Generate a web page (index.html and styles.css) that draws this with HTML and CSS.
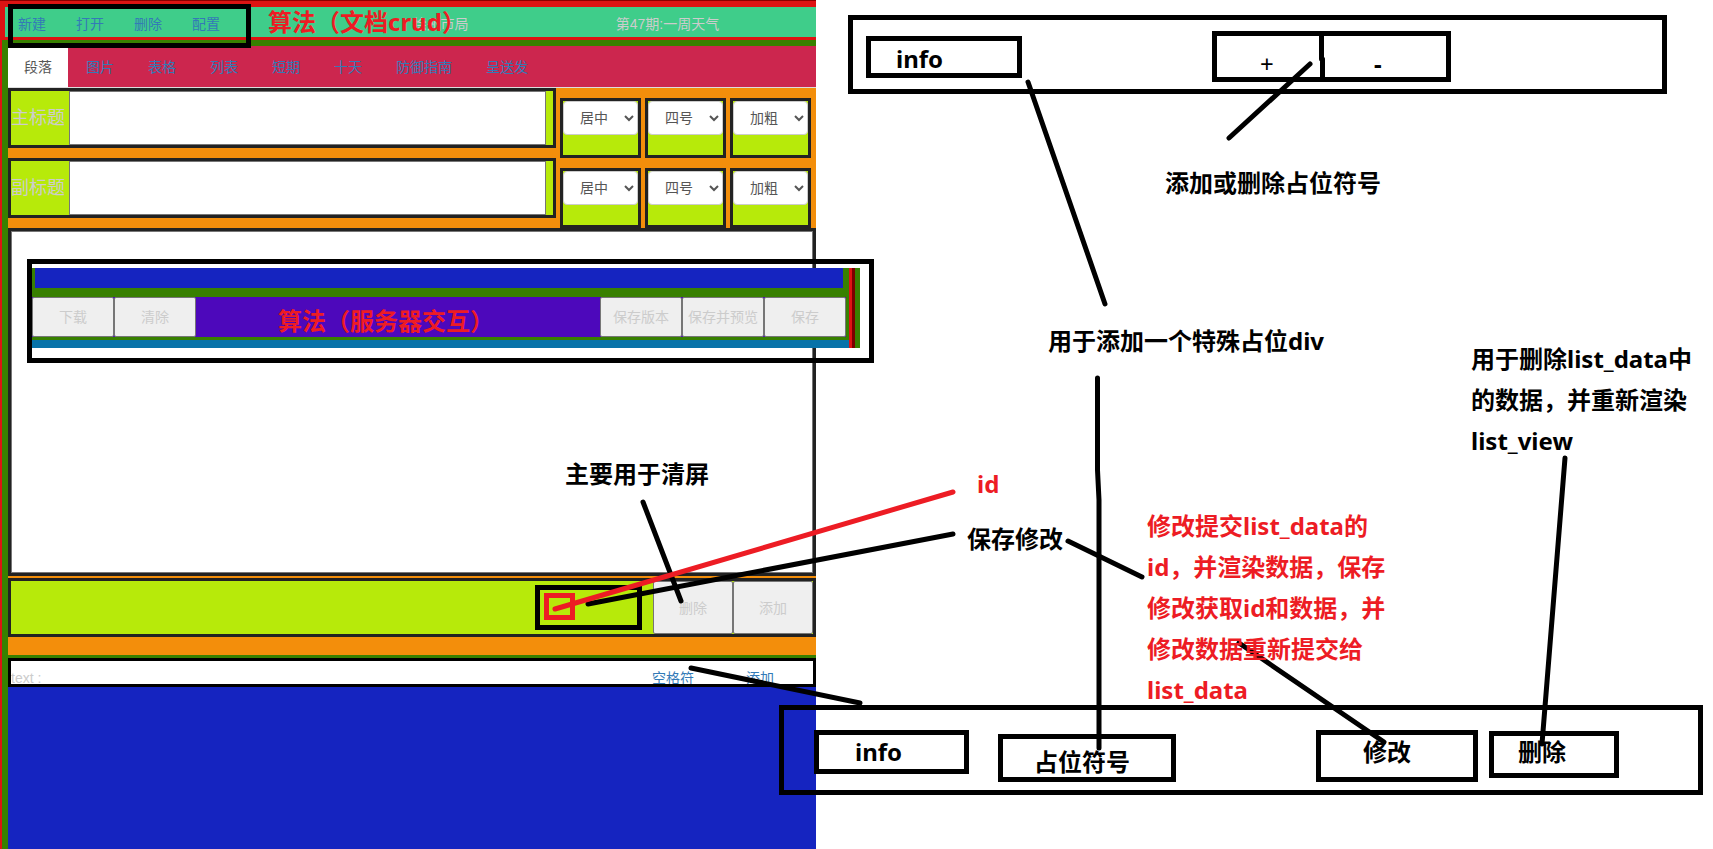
FILE: index.html
```html
<!DOCTYPE html>
<html lang="zh-CN">
<head>
<meta charset="utf-8">
<title>文档编辑</title>
<link rel="stylesheet" href="styles.css">
</head>
<body>
<div class="page">
  <main class="app">
    <header class="topbar">
      <nav class="menu"><a href="#">新建</a><a href="#">打开</a><a href="#">删除</a><a href="#">配置</a></nav>
      <span class="org">徐州市局</span>
      <span class="issue">第47期:一周天气</span>
    </header>
    <div class="body">
      <nav class="tabs">
        <a class="active" href="#">段落</a><a href="#">图片</a><a href="#">表格</a><a href="#">列表</a><a href="#">短期</a><a href="#">十天</a><a href="#">防御指南</a><a href="#">呈送发</a>
      </nav>
      <form class="editor">
        <div class="row">
          <div class="field"><label for="main-title">主标题</label><input id="main-title" type="text"></div>
          <div class="cell"><select aria-label="主标题对齐"><option>居中</option></select></div>
          <div class="cell"><select aria-label="主标题字号"><option>四号</option></select></div>
          <div class="cell"><select aria-label="主标题字重"><option>加粗</option></select></div>
        </div>
        <div class="row">
          <div class="field"><label for="sub-title">副标题</label><input id="sub-title" type="text"></div>
          <div class="cell"><select aria-label="副标题对齐"><option>居中</option></select></div>
          <div class="cell"><select aria-label="副标题字号"><option>四号</option></select></div>
          <div class="cell"><select aria-label="副标题字重"><option>加粗</option></select></div>
        </div>
        <textarea class="content" aria-label="正文"></textarea>
        <div class="actions"><button type="button">删除</button><button type="button">添加</button></div>
      </form>
      <div class="list-item"><span class="kind">text :</span><a href="#">空格符</a><a href="#">添加</a></div>
      <div class="list"></div>
    </div>
  </main>
</div>

<div class="notes">
  <section class="server">
    <div class="server-main">
      <div class="server-blue"></div>
      <div class="server-bar"><button type="button">下载</button><button type="button">清除</button><span class="spacer"></span><button type="button">保存版本</button><button type="button">保存并预览</button><button type="button">保存</button></div>
      <div class="server-foot"></div>
    </div>
    <div class="server-edge"></div>
  </section>
  <svg class="ink" width="1713" height="849" aria-hidden="true">
    <g class="pen">
      <rect x="10.500" y="6.500" width="238" height="39"/>
      <rect x="29.500" y="261.500" width="842" height="99"/>
      <rect x="850.500" y="17.500" width="814" height="74"/>
      <rect x="868.500" y="38.500" width="151" height="37"/>
      <rect x="1214.500" y="33.500" width="234" height="46"/>
      <path d="M1321.500 34V59M1322.500 59V79"/>
      <rect x="537.500" y="587.500" width="102" height="40"/>
      <rect x="781.500" y="707.500" width="919" height="85"/>
      <rect x="816.500" y="732.500" width="150" height="39"/>
      <rect x="1000.500" y="736.500" width="173" height="43"/>
      <rect x="1318.500" y="732.500" width="157" height="47"/>
      <rect x="1491.500" y="733.500" width="125" height="42"/>
      <path d="M643 502L681 601"/>
      <path d="M588 604L953 534"/>
      <path d="M691 668L860 703"/>
      <path d="M1028 82L1105 304"/>
      <path d="M1310 64L1229 138"/>
      <path d="M1097.500 378V470L1099 500V748"/>
      <path d="M1068 541L1142 577"/>
      <path d="M1239 643L1384 742"/>
      <path d="M1565 458L1542 744"/>
    </g>
    <g class="pen red">
      <rect x="546.500" y="595.500" width="26" height="22"/>
      <path d="M555 609L953 492"/>
    </g>
  </svg>
  <p class="note red n-crud">算法（文档crud）</p>
  <p class="note red n-server">算法（服务器交互）</p>
  <p class="note n-info">info</p>
  <p class="note n-plus">+</p>
  <p class="note n-minus">-</p>
  <p class="note n-symbol">添加或删除占位符号</p>
  <p class="note n-div">用于添加一个特殊占位div</p>
  <p class="note n-remove">用于删除list_data中<br>的数据，并重新渲染<br>list_view</p>
  <p class="note n-clear">主要用于清屏</p>
  <p class="note red n-id">id</p>
  <p class="note n-save">保存修改</p>
  <p class="note red n-edit">修改提交list_data的<br>id，并渲染数据，保存<br>修改获取id和数据，并<br>修改数据重新提交给<br>list_data</p>
  <p class="note n-info2">info</p>
  <p class="note n-holder">占位符号</p>
  <p class="note n-modify">修改</p>
  <p class="note n-delete">删除</p>
</div>
</body>
</html>
```
FILE: styles.css
```css
* { box-sizing: border-box; }
body {
  margin: 0;
  position: relative;
  min-height: 100vh;
  overflow: hidden;
  background: #fff;
  color: #ccc;
  font: 14px/20px "Liberation Sans", "Noto Sans CJK SC", sans-serif;
}
button, input, select, textarea { font: inherit; margin: 0; }
a { color: #337ab7; text-decoration: none; }

.page { display: grid; grid-template-columns: 816fr 897fr; min-height: 100vh; }
.app {
  display: flex;
  flex-direction: column;
  min-width: 0;
  background: #dd1313;
  border-top: 1px solid #8b0000;
}
.topbar {
  display: grid;
  grid-template-columns: 322fr 227fr 227fr 35fr;
  align-items: center;
  height: 30px;
  margin: 6px 0 3px 5px;
  padding-top: 3px;
  background: #3fcd8a;
}
.menu { display: flex; }
.menu a { padding: 0 15px; }
.menu a:first-child { padding-left: 13px; }
.org, .issue { text-align: center; }
.body {
  flex: 1;
  display: flex;
  flex-direction: column;
  margin-left: 2px;
  padding: 6px 0 0 6px;
  background: #388000;
}
.tabs {
  display: flex;
  gap: 2px;
  height: 42px;
  background: #cc264e;
  border-bottom: 1px solid #ddd;
}
.tabs a { padding: 11px 16px; }
.tabs .active { background: #fff; color: #555; }

.editor { display: flex; flex-direction: column; background: #f38e0b; padding-bottom: 18px; margin-bottom: 3px; }
.row { display: flex; gap: 4px; height: 70px; padding-right: 5px; }
.field {
  flex: 1;
  display: flex;
  height: 60px;
  padding-right: 7px;
  background: #b7ea0a;
  border: 3px solid #222;
}
.field label { width: 58px; font-size: 18px; line-height: 54px; white-space: nowrap; }
.field input { flex: 1; min-width: 0; border: 1px solid #767676; background: #fff; }
.cell {
  width: 81px;
  height: 60px;
  margin-top: 10px;
  background: #b7ea0a;
  border: 3px solid #222;
}
.cell select {
  display: block;
  width: 100%;
  height: 34px;
  padding: 6px 0 6px 12px;
  color: #555;
  background-color: #fff;
  border: 1px solid #ccc;
  border-radius: 4px;
}
.content {
  display: block;
  width: 100%;
  height: 348px;
  resize: none;
  border: 3px solid #222;
  outline: 1px solid #767676;
  outline-offset: -4px;
  background: #fff;
}
.actions {
  display: flex;
  justify-content: flex-end;
  height: 59px;
  margin-top: 2px;
  background: #b7ea0a;
  border: 3px solid #222;
}
.actions button, .server-bar button {
  padding: 0;
  color: #ccc;
  background: #efefef;
  border: 1px solid #767676;
  border-radius: 2px;
  white-space: nowrap;
}
.actions button { width: 80px; }
.list-item {
  display: grid;
  grid-template-columns: 641px 94px 1fr;
  height: 29px;
  padding-top: 7px;
  line-height: 20px;
  overflow: hidden;
  background: #fff;
  border: 3px solid #000;
}
.list { flex: 1; background: #1524c0; }

.notes { position: absolute; inset: 0; pointer-events: none; }
.server { position: absolute; left: 32px; top: 268px; width: 828px; display: flex; }
.server-main { flex: 1; background: #388000; }
.server-blue { height: 20px; margin: 0 6px 9px 3px; background: #1524c0; }
.server-bar { display: flex; height: 40px; margin: 0 3px 3px 0; background: #4d08bb; }
.server-bar button { width: 82px; }
.spacer { flex: 1; }
.server-foot { height: 8px; background: #0873a9; }
.server-edge { width: 11px; border-left: 3px solid #dd1313; background: linear-gradient(90deg, #7a0000 3px, #388000 3px); }
.ink { position: absolute; left: 0; top: 0; }
.pen { fill: none; stroke: #000; stroke-width: 5px; stroke-linecap: round; }
.pen.red { stroke: #ed1c24; }
.note {
  position: absolute;
  margin: 0;
  color: #000;
  font: bold 24px/41px "Noto Sans", "Noto Sans CJK SC", sans-serif;
  white-space: nowrap;
}
.note.red { color: #ed1c24; }
.n-crud { left: 268px; top: 1px; }
.n-server { left: 278px; top: 300px; }
.n-info { left: 896px; top: 38px; }
.n-plus { left: 1260px; top: 43px; font-weight: normal; }
.n-minus { left: 1374px; top: 43px; }
.n-symbol { left: 1165px; top: 162px; }
.n-div { left: 1048px; top: 320px; }
.n-remove { left: 1471px; top: 338px; }
.n-clear { left: 565px; top: 453px; }
.n-id { left: 977px; top: 463px; }
.n-save { left: 967px; top: 518px; }
.n-edit { left: 1147px; top: 505px; }
.n-info2 { left: 855px; top: 731px; }
.n-holder { left: 1034px; top: 741px; }
.n-modify { left: 1363px; top: 731px; }
.n-delete { left: 1518px; top: 731px; }
```
